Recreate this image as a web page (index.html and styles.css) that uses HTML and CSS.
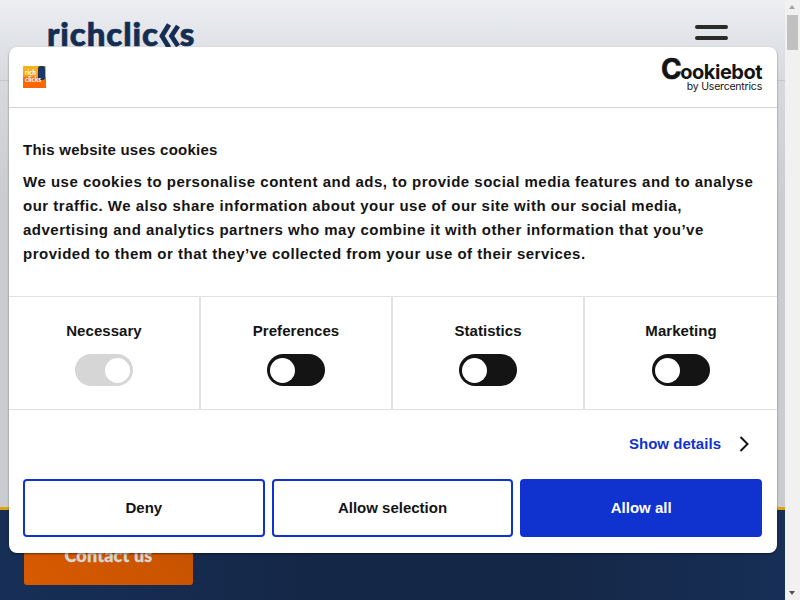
FILE: index.html
```html
<!DOCTYPE html>
<html lang="en">
<head>
<meta charset="utf-8">
<title>Richclicks</title>
<link rel="stylesheet" href="styles.css">
</head>
<body>
<div class="viewport">
  <header class="site-header">
    <div class="logo">richclic<svg class="logo-k" viewBox="0 0 21 26" aria-hidden="true"><path d="M10 1.500 3 13l7 11.500M19 3l-6.500 10L19 23" fill="none" stroke="#152d52" stroke-width="4.800"/></svg>s</div>
    <div class="burger"><span></span><span></span><span></span></div>
  </header>
  <main class="site-main"></main>
  <section class="hero">
    <a class="contact">Contact us</a>
  </section>
  <div class="dialog">
    <div class="dialog-head">
      <svg class="brand" viewBox="0 0 23 23" aria-hidden="true">
        <defs><linearGradient id="bg" x1="0" y1="0" x2="0" y2="1"><stop offset="0" stop-color="#fdb515"/><stop offset=".48" stop-color="#fc9c10"/><stop offset=".52" stop-color="#fd6a05"/><stop offset="1" stop-color="#fe6500"/></linearGradient></defs>
        <rect width="23" height="22" fill="url(#bg)"/>
        <rect x="15" y="0" width="7" height="14" rx="2" fill="#1c3563"/>
        <text x="2" y="9" class="brand-t">rich</text>
        <text x="2" y="16" class="brand-t">clicks</text>
      </svg>
      <div class="cb">
        <div class="cb-name"><span class="cb-c">C</span>ookiebot</div>
        <div class="cb-by">by Usercentrics</div>
      </div>
    </div>
    <div class="dialog-body">
      <h2 class="title">This website uses cookies</h2>
      <p class="text">We use cookies to personalise content and ads, to provide social media features and to analyse our traffic. We also share information about your use of our site with our social media, advertising and analytics partners who may combine it with other information that you’ve provided to them or that they’ve collected from your use of their services.</p>
    </div>
    <div class="toggles">
      <div class="cell"><strong class="label">Necessary</strong><span class="toggle toggle-on"><i class="knob"></i></span></div>
      <div class="cell"><strong class="label">Preferences</strong><span class="toggle"><i class="knob"></i></span></div>
      <div class="cell"><strong class="label">Statistics</strong><span class="toggle"><i class="knob"></i></span></div>
      <div class="cell"><strong class="label">Marketing</strong><span class="toggle"><i class="knob"></i></span></div>
    </div>
    <div class="details">
      <a class="details-link">Show details</a>
      <svg class="chevron" viewBox="0 0 10 16" aria-hidden="true"><path d="M1.500 1 8.500 8l-7 7" fill="none" stroke="#141414" stroke-width="2"/></svg>
    </div>
    <div class="actions">
      <button class="btn">Deny</button>
      <button class="btn">Allow selection</button>
      <button class="btn btn-primary">Allow all</button>
    </div>
  </div>
</div>
<div class="scrollbar" aria-hidden="true">
  <span class="arrow arrow-up"></span>
  <span class="track"><i class="thumb"></i></span>
  <span class="arrow arrow-down"></span>
</div>
</body>
</html>
```
FILE: styles.css
```css
* { box-sizing: border-box; }
html, body { height: 100%; }
body {
  margin: 0;
  display: flex;
  overflow: hidden;
  font-family: "Liberation Sans", Arial, sans-serif;
  color: #141414;
}
.viewport {
  position: relative;
  flex: 1;
  min-width: 0;
  overflow: hidden;
  background: linear-gradient(#eceef2 0, #d6d9de 80px, #c9cdd2 200px);
}
.scrollbar {
  width: 15px;
  flex: none;
  display: flex;
  flex-direction: column;
  align-items: center;
  background: #f1f1f1;
}
.arrow { flex: none; width: 15px; height: 15px; position: relative; }
.arrow::after {
  content: "";
  position: absolute;
  left: 4px;
  border-left: 3.500px solid transparent;
  border-right: 3.500px solid transparent;
}
.arrow-up::after { top: 5px; border-bottom: 4px solid #a3a3a3; }
.arrow-down::after { top: 6px; border-top: 4px solid #505050; }
.track { flex: 1; width: 100%; padding: 0 2px; }
.thumb { display: block; width: 11px; height: 35px; background: #c1c1c1; }
.site-header {
  height: 81px;
  display: flex;
  align-items: flex-start;
  justify-content: space-between;
  padding: 15px 57px 0 47px;
  border-bottom: 1px solid #c4c7cc;
}
.logo {
  font-family: Lato, sans-serif;
  font-weight: 900;
  font-size: 33px;
  line-height: 36px;
  letter-spacing: .9px;
  -webkit-text-stroke: .7px #152d52;
  color: #152d52;
  display: flex;
  align-items: center;
}
.logo-k { width: 21px; height: 26px; margin-top: 5px; flex: none; }
.burger { display: flex; flex-direction: column; gap: 7px; padding-top: 10px; }
.burger span { display: block; width: 33px; height: 4px; border-radius: 2px; background: #2a2a2a; }
.site-main { height: 426px; }
.hero {
  height: 93px;
  border-top: 3px solid #e0a010;
  background: linear-gradient(90deg, #172f56, #142747 40%, #142747 70%, #172f56);
  padding: 15px 24px;
}
.contact {
  display: flex;
  align-items: center;
  justify-content: center;
  width: 169px;
  height: 60px;
  border-radius: 3px;
  background: linear-gradient(45deg, #d85a00, #c45200);
  color: #d6d6d6;
  font-family: Lato, sans-serif;
  font-weight: 900;
  font-size: 18px;
  letter-spacing: .2px;
  -webkit-text-stroke: .3px #d6d6d6;
}
.dialog {
  position: absolute;
  left: 9px;
  top: 47px;
  width: 768px;
  height: 506px;
  background: #fff;
  border-radius: 8px;
  box-shadow: 0 1px 2px rgba(0, 0, 0, .5);
  overflow: hidden;
}
.dialog-head {
  height: 61px;
  display: flex;
  align-items: flex-start;
  justify-content: space-between;
  padding: 16px 15px 0 14px;
  border-bottom: 1px solid #d6d6d6;
}
.brand { width: 23px; height: 23px; margin-top: 3px; }
.brand-t { font-family: Lato, sans-serif; font-weight: 900; font-size: 6.5px; fill: #fff; }
.cb { display: flex; flex-direction: column; align-items: flex-end; }
.cb-name { font-family: Inter, sans-serif; font-weight: 700; font-size: 20px; line-height: 18px; letter-spacing: -.5px; color: #141414; }
.cb-c { font-size: 28px; line-height: 0; letter-spacing: -1.500px; -webkit-text-stroke: .6px #141414; }
.cb-by { font-family: Inter, sans-serif; font-size: 10.500px; line-height: 11px; letter-spacing: -.2px; color: #141414; }
.dialog-body { height: 188px; padding: 33px 14px 0; }
.title { margin: 0; font-size: 15px; line-height: 18px; font-weight: 700; letter-spacing: .25px; }
.text { margin: 11px 0 0; font-size: 15px; line-height: 24px; font-weight: 700; letter-spacing: .5px; }
.toggles {
  display: grid;
  grid-template-columns: repeat(4, 1fr);
  height: 114px;
  border-top: 1px solid #e2e2e2;
  border-bottom: 1px solid #e2e2e2;
}
.cell {
  display: flex;
  flex-direction: column;
  align-items: center;
  padding-top: 25px;
  gap: 14px;
  border-right: 2px solid #e2e2e2;
}
.cell:last-child { border-right: 0; }
.label { font-size: 15px; line-height: 18px; letter-spacing: .05px; }
.toggle {
  display: flex;
  align-items: center;
  width: 58px;
  height: 32px;
  border-radius: 16px;
  background: #141414;
  padding: 0 3px;
}
.knob { display: block; width: 25px; height: 25px; border-radius: 50%; background: #fff; }
.toggle-on { background: #d6d6d6; justify-content: flex-end; }
.details {
  display: flex;
  align-items: center;
  justify-content: flex-end;
  gap: 18px;
  height: 67px;
  padding: 0 28px 0 0;
}
.details-link { font-size: 15px; font-weight: 700; letter-spacing: .03px; color: #1032cf; }
.chevron { width: 10px; height: 16px; }
.actions { display: grid; grid-template-columns: repeat(3, 1fr); gap: 7px; padding: 2px 15px 0 14px; }
.btn {
  height: 58px;
  padding: 0 0 2px;
  border: 2px solid #1032cf;
  border-radius: 4px;
  background: #fff;
  color: #141414;
  font: 700 15px "Liberation Sans", Arial, sans-serif;
}
.btn-primary { background: #1032cf; color: #fff; }
```
